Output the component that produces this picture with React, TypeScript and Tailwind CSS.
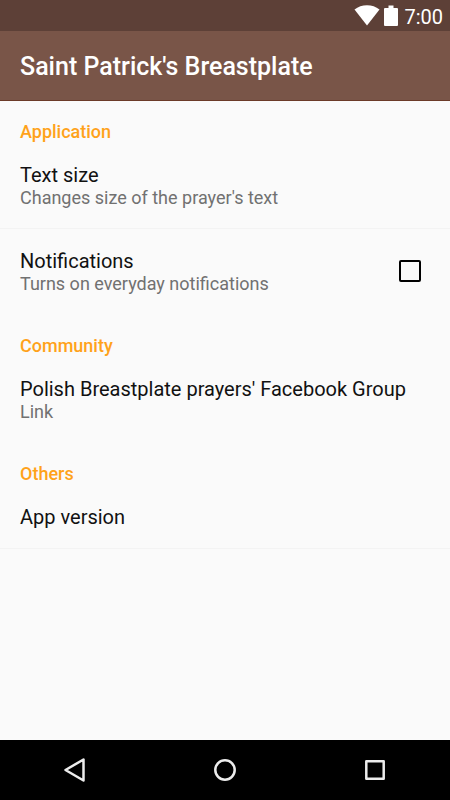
import { useState, type ReactNode } from 'react';

function StatusBar() {
  return (
    <div className="flex h-[31px] items-center justify-end bg-[#5d4037] pr-[7px] text-white">
      <svg width="26" height="21" viewBox="0 0 26 21" fill="currentColor" aria-hidden>
        <path d="M0.500 4.500C4 1.600 8.300 0.200 13 0.200s9 1.400 12.500 4.300L13 20.500z" />
      </svg>
      <svg className="ml-1" width="14" height="21" viewBox="0 0 14 21" fill="currentColor" aria-hidden>
        <path d="M4.500 0.500h5v2.500H13a1 1 0 0 1 1 1v16a1 1 0 0 1-1 1H1a1 1 0 0 1-1-1V4a1 1 0 0 1 1-1h3.500z" />
      </svg>
      <span className="ml-1.5 pt-0.5 text-[20px] leading-6">7:00</span>
    </div>
  );
}

function Category({ title, children }: { title: string; children: ReactNode }) {
  return (
    <section>
      <h2 className="px-5 pt-5 text-[18px] leading-[22px] font-medium text-[#ffa21a]">{title}</h2>
      {children}
    </section>
  );
}

type PreferenceProps = {
  title: string;
  summary?: string;
  divider?: boolean;
};

function PreferenceText({ title, summary }: PreferenceProps) {
  return (
    <span className="block min-w-0">
      <span className="block text-[20px] leading-6 text-[#111111]">{title}</span>
      {summary ? <span className="block text-[18px] leading-[22px] text-[#717171]">{summary}</span> : null}
    </span>
  );
}

function Preference({ title, summary, divider }: PreferenceProps) {
  return (
    <button
      type="button"
      className={[
        'block w-full border-b px-5 pt-5 pb-[19px] text-left',
        divider ? 'border-[#f3f3f3]' : 'border-transparent',
      ].join(' ')}
    >
      <PreferenceText title={title} summary={summary} />
    </button>
  );
}

export default function App() {
  const [notifications, setNotifications] = useState(false);

  return (
    <div className="flex min-h-screen flex-col bg-[#fafafa] font-['Roboto',sans-serif]">
      <StatusBar />
      <header className="flex h-[70px] items-center border-b border-[#6b3a28] bg-[#795548] px-5">
        <h1 className="pt-0.5 text-[25px] leading-8 font-medium text-white">Saint Patrick's Breastplate</h1>
      </header>

      <main className="flex-1">
        <Category title="Application">
          <Preference title="Text size" summary="Changes size of the prayer's text" divider />
          <label className="flex items-center justify-between gap-4 border-b border-transparent pt-5 pr-[29px] pb-[19px] pl-5">
            <PreferenceText title="Notifications" summary="Turns on everyday notifications" />
            <input
              type="checkbox"
              checked={notifications}
              onChange={(e) => setNotifications(e.target.checked)}
              className="mb-0.5 size-[22px] shrink-0 appearance-none rounded-[2px] border-2 border-black checked:bg-[#ffa21a]"
            />
          </label>
        </Category>

        <Category title="Community">
          <a href="#group" className="block border-b border-transparent px-5 pt-5 pb-[19px]">
            <PreferenceText title="Polish Breastplate prayers' Facebook Group" summary="Link" />
          </a>
        </Category>

        <Category title="Others">
          <Preference title="App version" divider />
        </Category>
      </main>

      <nav className="grid h-[60px] grid-cols-3 bg-black text-[#ececec]">
        <button type="button" aria-label="Back" className="flex items-center justify-center">
          <svg width="24" height="26" viewBox="0 0 24 26" fill="none" stroke="currentColor" strokeWidth="2.500" strokeLinejoin="round" aria-hidden>
            <path d="M20.500 2.500v21L2.500 13z" />
          </svg>
        </button>
        <button type="button" aria-label="Home" className="flex items-center justify-center">
          <svg width="24" height="24" viewBox="0 0 24 24" fill="none" stroke="currentColor" strokeWidth="2.500" aria-hidden>
            <circle cx="12" cy="12" r="9.700" />
          </svg>
        </button>
        <button type="button" aria-label="Recent apps" className="flex items-center justify-center">
          <svg width="20" height="20" viewBox="0 0 20 20" fill="none" stroke="currentColor" strokeWidth="2.500" strokeLinejoin="round" aria-hidden>
            <rect x="1.300" y="1.300" width="17.400" height="17.400" />
          </svg>
        </button>
      </nav>
    </div>
  );
}
